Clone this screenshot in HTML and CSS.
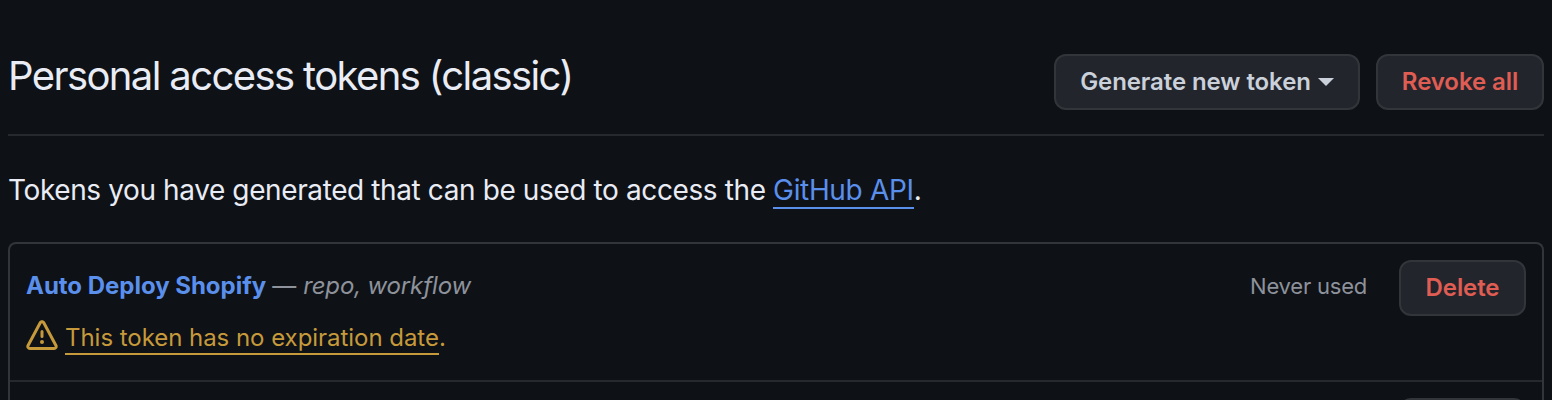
FILE: index.html
```html
<!DOCTYPE html>
<html lang="en">
<head>
<meta charset="utf-8">
<title>Personal access tokens (classic)</title>
<link rel="stylesheet" href="styles.css">
</head>
<body>
<main class="page">
  <header class="header">
    <h1 class="title">Personal access tokens (classic)</h1>
    <div class="actions">
      <button class="btn generate"><span>Generate new token</span><span class="caret"></span></button>
      <button class="btn danger revoke">Revoke all</button>
    </div>
  </header>
  <p class="intro">Tokens you have generated that can be used to access the <a class="link" href="#">GitHub API</a>.</p>
  <section class="tokens">
    <div class="token">
      <div class="details">
        <div class="name-line"><a class="name" href="#">Auto Deploy Shopify</a><span class="dash">—</span><em class="scopes">repo, workflow</em></div>
        <div class="warning">
          <svg class="alert" viewBox="0 0 16 16" fill="currentColor"><path d="M6.457 1.047c.659-1.234 2.427-1.234 3.086 0l6.082 11.378A1.75 1.75 0 0 1 14.082 15H1.918a1.75 1.75 0 0 1-1.543-2.575Zm1.763.707a.25.25 0 0 0-.44 0L1.698 13.132a.25.25 0 0 0 .22.368h12.164a.25.25 0 0 0 .22-.368Zm.53 3.996v2.5a.75.75 0 0 1-1.5 0v-2.5a.75.75 0 0 1 1.5 0ZM9 11a1 1 0 1 1-2 0 1 1 0 0 1 2 0Z"/></svg>
          <span class="warning-text"><a class="expiry" href="#">This token has no expiration date</a>.</span>
        </div>
      </div>
      <div class="side"><span class="used">Never used</span><button class="btn danger delete">Delete</button></div>
    </div>
    <div class="token token-next">
      <div class="side"><button class="btn danger delete"></button></div>
    </div>
  </section>
</main>
</body>
</html>
```
FILE: styles.css
```css
* { box-sizing: border-box; }
html { background: #0e1116; }
body { margin: 0; background: #0e1116; color: #e9ecf4; font-family: Inter, sans-serif; }
.page { display: flex; flex-direction: column; height: 400px; padding: 54px 8px 0; overflow: hidden; }
.header { flex: none; display: flex; justify-content: space-between; height: 82px; border-bottom: 2px solid #26292e; }
.title { margin: 0; font-size: 40px; line-height: 44px; font-weight: 430; letter-spacing: -1.61px; white-space: nowrap; }
.actions { display: flex; gap: 16px; }
.btn { display: flex; align-items: center; justify-content: center; height: 56px; padding: 0 0 2px; border: 2px solid #323539; border-radius: 12px; background: #22252c; color: #cbd1da; font: 560 24px Inter, sans-serif; letter-spacing: -0.08px; white-space: nowrap; }
.generate { width: 306px; gap: 7px; }
.caret { margin-top: 2px; border: 8px solid transparent; border-top-color: currentColor; border-bottom: 0; }
.danger { color: #e05d53; }
.revoke { width: 168px; }
.intro { flex: none; margin: 36px 0 0; height: 70px; font-size: 28px; line-height: 36px; font-weight: 420; letter-spacing: -0.39px; white-space: nowrap; }
.link { color: #5b8fec; letter-spacing: -0.34px; text-decoration: none; border-bottom: 2px solid currentColor; }
.tokens { flex: 1; min-height: 0; overflow: hidden; border: 2px solid #323539; border-bottom: 0; border-radius: 8px 8px 0 0; }
.token { display: flex; justify-content: space-between; height: 138px; padding: 16px; border-bottom: 2px solid #26292e; }
.token-next { justify-content: flex-end; }
.details { padding-top: 8px; }
.name-line { display: flex; font-size: 24px; line-height: 36px; color: #8d929b; white-space: nowrap; }
.name { color: #5b8fec; font-weight: 650; letter-spacing: -0.02px; text-decoration: none; }
.dash { margin: 0 7px 0 6px; }
.scopes { letter-spacing: -0.14px; }
.warning { display: flex; gap: 7px; margin-top: 16px; color: #c69a3b; font-size: 24px; line-height: 36px; letter-spacing: -0.04px; white-space: nowrap; }
.alert { width: 32px; height: 32px; }
.expiry { color: inherit; text-decoration: none; padding-bottom: 1px; border-bottom: 2px solid currentColor; }
.side { display: flex; gap: 32px; }
.used { padding-top: 8px; color: #8d929b; font-size: 22px; line-height: 36px; letter-spacing: -0.22px; }
.delete { width: 127px; }
```
